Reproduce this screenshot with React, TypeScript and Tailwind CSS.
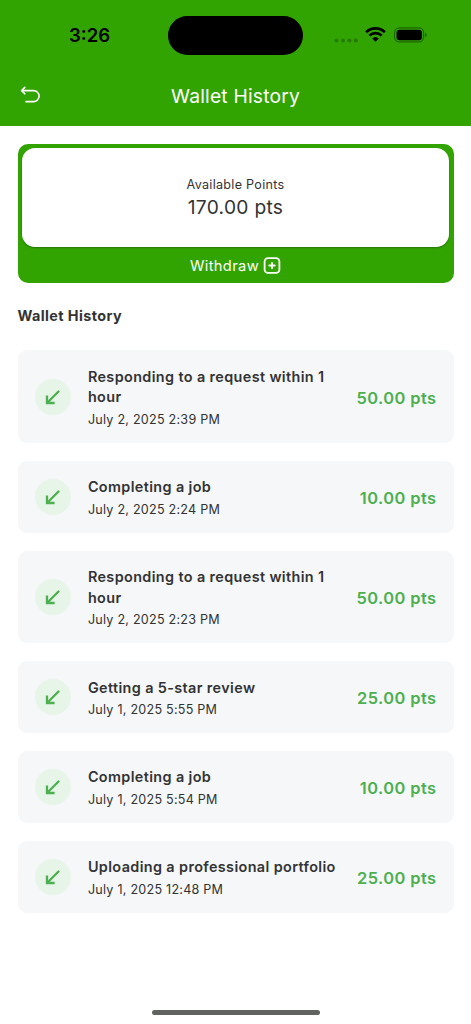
type HistoryItem = {
    id: number;
    title: string;
    date: string;
    points: string;
};

const historyItems: HistoryItem[] = [
    { id: 1, title: "Responding to a request within 1 hour", date: "July 2, 2025 2:39 PM", points: "50.00" },
    { id: 2, title: "Completing a job", date: "July 2, 2025 2:24 PM", points: "10.00" },
    { id: 3, title: "Responding to a request within 1 hour", date: "July 2, 2025 2:23 PM", points: "50.00" },
    { id: 4, title: "Getting a 5-star review", date: "July 1, 2025 5:55 PM", points: "25.00" },
    { id: 5, title: "Completing a job", date: "July 1, 2025 5:54 PM", points: "10.00" },
    { id: 6, title: "Uploading a professional portfolio", date: "July 1, 2025 12:48 PM", points: "25.00" },
];

function StatusBar() {
    return (
        <div className="flex h-[70px] items-center pl-[69px] pr-[43px]">
            <span className="w-[99px] text-[18.6px] font-semibold leading-6 text-black">3:26</span>
            <div className="h-[39px] w-[135px] shrink-0 rounded-full bg-black" />

            <div className="ml-auto flex items-center">
                <svg width="25" height="5" viewBox="0 0 25 5" className="mt-[10px] fill-black/25">
                    <circle cx="2.5" cy="2.5" r="2" />
                    <circle cx="9" cy="2.5" r="2" />
                    <circle cx="15.4" cy="2.5" r="2" />
                    <circle cx="21.8" cy="2.5" r="2" />
                </svg>
                <svg width="21" height="15" viewBox="0 0 21 15" className="mb-px ml-[6px]" fill="none" stroke="#000">
                    <path d="M1.2 5.2a13.3 13.3 0 0 1 18.6 0" strokeWidth="2.7" />
                    <path d="M4.4 8.7a8.6 8.6 0 0 1 12.2 0" strokeWidth="2.6" />
                    <path d="M7.2 11.5a4.8 4.8 0 0 1 6.6 0L10.5 14.8z" fill="#000" stroke="none" />
                </svg>
                <svg width="34" height="16" viewBox="0 0 34 16" className="ml-[8px]">
                    <rect x="0.6" y="0.9" width="29" height="14" rx="4.6" fill="none" stroke="#000" strokeOpacity="0.4" strokeWidth="1.1" />
                    <rect x="2.5" y="2.8" width="25.4" height="10.4" rx="3" />
                    <path d="M31.2 5.5c2 .8 2 4 0 4.8z" fillOpacity="0.45" />
                </svg>
            </div>
        </div>
    );
}

function HistoryCard({ item }: { item: HistoryItem }) {
    return (
        <div className="flex items-center rounded-[9px] bg-[#f5f7f9] pb-[14.5px] pl-[17.4px] pr-[17px] pt-[16.5px]">
            <div className="-mt-[2px] flex size-[36px] shrink-0 items-center justify-center rounded-full bg-[#e7f5e8]">
                <svg width="16" height="16" viewBox="0 0 16 16" fill="none" stroke="#4caf50" strokeWidth="2.3">
                    <path d="M13.5 2.5 2.3 13.7" strokeLinecap="round" />
                    <path d="M2 6.4v7.6h7.6" />
                </svg>
            </div>

            <div className="ml-[17px] min-w-0 flex-1">
                <p className="max-w-[252px] text-[14.4px] font-semibold leading-[20.5px] tracking-[0.38px] text-[#333333]">
                    {item.title}
                </p>
                <p className="mt-[3.3px] text-[12.6px] leading-[17.5px] tracking-[0.23px] text-[#333333]">
                    {item.date}
                </p>
            </div>

            <span className="shrink-0 whitespace-nowrap text-[16.4px] font-semibold leading-6 tracking-[0.44px] text-[#4caf50]">
                {item.points} pts
            </span>
        </div>
    );
}

export default function App() {
    return (
        <div className="flex h-[1024px] w-[471px] flex-col overflow-hidden bg-white font-['Inter',sans-serif]">
            <header className="h-[126.4px] shrink-0 bg-[#32a402]">
                <StatusBar />
                <div className="grid grid-cols-[60px_1fr_60px] items-center pt-[12px]">
                    <button className="-mt-[2px] pl-[20px]" aria-label="Back">
                        <svg
                            width="21"
                            height="18"
                            viewBox="0 0 21 18"
                            fill="none"
                            stroke="#fff"
                            strokeWidth="1.6"
                            strokeLinecap="round"
                            strokeLinejoin="round"
                        >
                            <path d="M4.8 1.4 1.6 4.6l3.2 3.2" />
                            <path d="M2 4.6h11.6a5.5 5.5 0 0 1 0 11H5.8" />
                        </svg>
                    </button>
                    <h1 className="text-center text-[19.3px] leading-7 tracking-[0.17px] text-white">Wallet History</h1>
                </div>
            </header>

            <main className="flex-1 px-[17.5px] pt-[17.4px]">
                <section className="h-[139px] rounded-[10px] bg-[#32a402] px-[4.4px] pt-[4.4px]">
                    <div className="flex h-[98.5px] flex-col items-center rounded-[13px] bg-white pt-[28px] text-[#333333] shadow-[0_1px_2px_rgba(0,0,0,0.3)]">
                        <span className="text-[12.6px] leading-[18px] tracking-[0.28px]">Available Points</span>
                        <span className="text-[19.2px] leading-[27px] tracking-[0.3px]">170.00 pts</span>
                    </div>
                    <button className="flex h-[36px] w-full items-center justify-center gap-[4px] pt-[2px] text-white">
                        <span className="text-[14.7px] leading-5 tracking-[0.36px]">Withdraw</span>
                        <svg width="18" height="18" viewBox="0 0 18 18" fill="none" stroke="#fff" strokeLinecap="round">
                            <rect x="1.6" y="1.1" width="14.8" height="14.8" rx="3.4" strokeWidth="1.8" />
                            <path d="M9 5.8v5.4M6.3 8.5h5.4" strokeWidth="1.8" />
                        </svg>
                    </button>
                </section>

                <h2 className="mt-[22.6px] text-[14.4px] font-bold leading-[21px] tracking-[0.4px] text-[#333333]">
                    Wallet History
                </h2>

                <div className="mt-[24px] flex flex-col gap-[17.6px]">
                    {historyItems.map((item) => (
                        <HistoryCard key={item.id} item={item} />
                    ))}
                </div>
            </main>

            {/* home indicator */}
            <div className="flex h-[17px] shrink-0 items-start justify-center pt-[2.5px]">
                <div className="h-[5.5px] w-[168px] rounded-full bg-[#616361]" />
            </div>
        </div>
    );
}
